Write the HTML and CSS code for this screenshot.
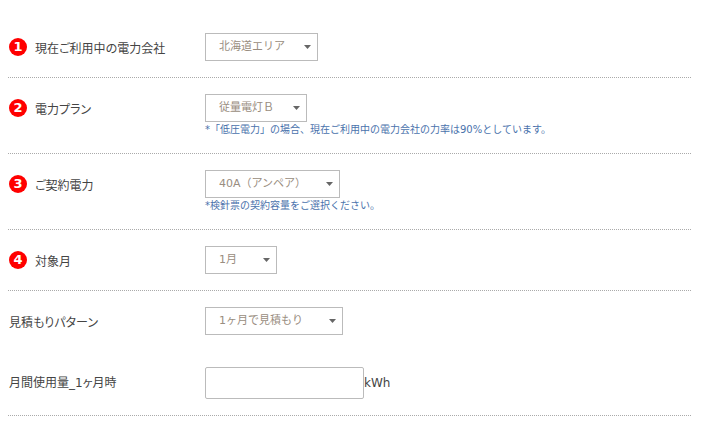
FILE: index.html
```
<!DOCTYPE html>
<html lang="ja">
<head>
  <meta charset="UTF-8">
  <title>電気料金見積もり</title>
  <link rel="stylesheet" href="styles.css">
</head>
<body>
  <form class="estimate">
    <div class="row">
      <label class="name" for="area"><span class="num">1</span>現在ご利用中の電力会社</label>
      <div class="field">
        <select id="area">
          <option>北海道エリア</option>
        </select>
      </div>
    </div>

    <div class="row">
      <label class="name" for="plan"><span class="num">2</span>電力プラン</label>
      <div class="field">
        <select id="plan">
          <option>従量電灯Ｂ</option>
        </select>
        <p class="note">*「低圧電力」の場合、現在ご利用中の電力会社の力率は90%としています。</p>
      </div>
    </div>

    <div class="row">
      <label class="name" for="ampere"><span class="num">3</span>ご契約電力</label>
      <div class="field">
        <select id="ampere">
          <option>40A（アンペア）</option>
        </select>
        <p class="note">*検針票の契約容量をご選択ください。</p>
      </div>
    </div>

    <div class="row">
      <label class="name" for="month"><span class="num">4</span>対象月</label>
      <div class="field">
        <select id="month">
          <option>1月</option>
          <option>12月</option>
        </select>
      </div>
    </div>

    <div class="row no-line">
      <label class="name" for="pattern">見積もりパターン</label>
      <div class="field">
        <select id="pattern">
          <option>1ヶ月で見積もり</option>
          <option>12ヶ月で見積もり</option>
        </select>
      </div>
    </div>

    <div class="row">
      <label class="name" for="usage">月間使用量_1ヶ月時</label>
      <div class="field usage">
        <input type="text" id="usage"><span class="unit">kWh</span>
      </div>
    </div>
  </form>
</body>
</html>
```
FILE: styles.css
```
*, *:before, *:after {
  box-sizing: border-box;
}

body {
  margin: 0;
  padding: 17px 14px 14px 8px;
  background: #fff;
  color: #444;
  font-family: "DejaVu Sans", "Noto Sans CJK JP", sans-serif;
  font-size: 12px;
}

.row {
  display: flex;
  align-items: flex-start;
  padding: 16px 0;
  border-bottom: 1px dotted #aaa;
}

.row.no-line {
  border-bottom: 0;
}

.name {
  display: flex;
  align-items: center;
  flex: 0 0 197px;
  height: 28px;
  padding-left: 1px;
  font-feature-settings: "palt";
}

.num {
  width: 18px;
  height: 18px;
  margin-right: 8px;
  border-radius: 50%;
  background: #f00;
  color: #fff;
  font-size: 13px;
  font-weight: bold;
  line-height: 18px;
  text-align: center;
}

.field {
  flex: 1;
}

select {
  display: block;
  height: 28px;
  margin: 0;
  padding: 0 32px 2px 13px;
  border: 1px solid #bbb;
  border-radius: 0;
  background: #fff url("data:image/svg+xml,%3Csvg xmlns='http://www.w3.org/2000/svg' width='7' height='4'%3E%3Cpath d='M0 0h7L3.5 4z' fill='%23666'/%3E%3C/svg%3E") no-repeat right 6px center;
  color: #998d80;
  font-family: inherit;
  font-size: 11px;
  appearance: none;
}

.note {
  margin: 0;
  color: #4a72ac;
  font-size: 10px;
  line-height: 15px;
}

.usage {
  display: flex;
  align-items: center;
}

.usage input {
  width: 159px;
  height: 32px;
  padding: 0 8px;
  border: 1px solid #bbb;
  border-radius: 2px;
  font: inherit;
}
```
